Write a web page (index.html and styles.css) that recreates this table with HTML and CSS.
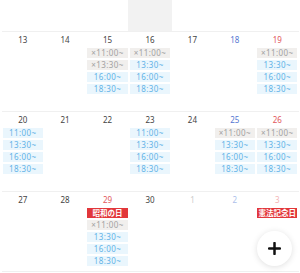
FILE: index.html
```html
<!DOCTYPE html>
<html lang="ja">
<head>
<meta charset="utf-8">
<link rel="stylesheet" href="styles.css">
</head>
<body>
<div class="cal">
  <div class="week partial">
    <div class="cell"></div><div class="cell"></div><div class="cell"></div>
    <div class="cell closed"></div>
    <div class="cell"></div><div class="cell"></div><div class="cell"></div>
  </div>
  <div class="week">
    <div class="cell"><div class="date">13</div></div>
    <div class="cell"><div class="date">14</div></div>
    <div class="cell"><div class="date">15</div>
      <div class="slot full">×11:00~</div><div class="slot full">×13:30~</div>
      <div class="slot">16:00~</div><div class="slot">18:30~</div></div>
    <div class="cell"><div class="date">16</div>
      <div class="slot full">×11:00~</div><div class="slot">13:30~</div>
      <div class="slot">16:00~</div><div class="slot">18:30~</div></div>
    <div class="cell"><div class="date">17</div></div>
    <div class="cell"><div class="date sat">18</div></div>
    <div class="cell"><div class="date sun">19</div>
      <div class="slot full">×11:00~</div><div class="slot">13:30~</div>
      <div class="slot">16:00~</div><div class="slot">18:30~</div></div>
  </div>
  <div class="week">
    <div class="cell"><div class="date">20</div>
      <div class="slot">11:00~</div><div class="slot">13:30~</div>
      <div class="slot">16:00~</div><div class="slot">18:30~</div></div>
    <div class="cell"><div class="date">21</div></div>
    <div class="cell"><div class="date">22</div></div>
    <div class="cell"><div class="date">23</div>
      <div class="slot">11:00~</div><div class="slot">13:30~</div>
      <div class="slot">16:00~</div><div class="slot">18:30~</div></div>
    <div class="cell"><div class="date">24</div></div>
    <div class="cell"><div class="date sat">25</div>
      <div class="slot full">×11:00~</div><div class="slot">13:30~</div>
      <div class="slot">16:00~</div><div class="slot">18:30~</div></div>
    <div class="cell"><div class="date sun">26</div>
      <div class="slot full">×11:00~</div><div class="slot">13:30~</div>
      <div class="slot">16:00~</div><div class="slot">18:30~</div></div>
  </div>
  <div class="week">
    <div class="cell"><div class="date">27</div></div>
    <div class="cell"><div class="date">28</div></div>
    <div class="cell"><div class="date sun">29</div>
      <div class="holiday">昭和の日</div>
      <div class="slot full">×11:00~</div><div class="slot">13:30~</div>
      <div class="slot">16:00~</div><div class="slot">18:30~</div></div>
    <div class="cell"><div class="date">30</div></div>
    <div class="cell"><div class="date other">1</div></div>
    <div class="cell"><div class="date other sat">2</div></div>
    <div class="cell"><div class="date other sun">3</div>
      <div class="holiday">憲法記念日</div></div>
  </div>
</div>
<button class="fab" aria-label="追加">
  <svg width="13" height="13" viewBox="0 0 13 13"><path d="M6.5 1v11M1 6.5h11" stroke="#111" stroke-width="2.5" stroke-linecap="round"/></svg>
</button>
</body>
</html>
```
FILE: styles.css
```css
html, body {
  margin: 0;
  padding: 0;
  background: #fff;
  overflow: hidden;
  font-family: "Noto Sans", "Noto Sans CJK JP", sans-serif;
}
.cal {
  padding: 0 1.5px;
}
.week {
  display: grid;
  grid-template-columns: repeat(7, 1fr);
  height: 79px;
  border-bottom: 1px solid #f0f0f0;
}
.week.partial {
  height: 31px;
}
.cell {
  padding: 0 1px;
  display: flex;
  flex-direction: column;
  gap: 2px;
  min-width: 0;
}
.cell.closed {
  background: #f2f2f2;
  margin: 0 -1px;
}
.date {
  height: 14px;
  line-height: 16px;
  font-size: 8px;
  color: #444;
  text-align: center;
}
.date.sat { color: #5577d2; }
.date.sun { color: #e2585c; }
.date.other { color: #cccccc; }
.date.other.sat { color: #adc0ea; }
.date.other.sun { color: #f3b5b5; }
.slot {
  height: 10px;
  line-height: 10px;
  font-size: 8px;
  text-align: center;
  background: #eaf6fd;
  color: #62b3e7;
  letter-spacing: 0.4px;
}
.slot.full {
  background: #f1efed;
  color: #a2a2a2;
}
.holiday {
  height: 10px;
  line-height: 10px;
  font-size: 7.5px;
  font-weight: 700;
  text-align: center;
  background: #e2373b;
  color: #fff;
}
.fab {
  position: fixed;
  left: 257px;
  top: 231px;
  width: 35px;
  height: 35px;
  border-radius: 50%;
  border: none;
  background: #fff;
  box-shadow: 0 1px 6px rgba(0,0,0,0.13);
  display: flex;
  align-items: center;
  justify-content: center;
  padding: 0;
}
```
